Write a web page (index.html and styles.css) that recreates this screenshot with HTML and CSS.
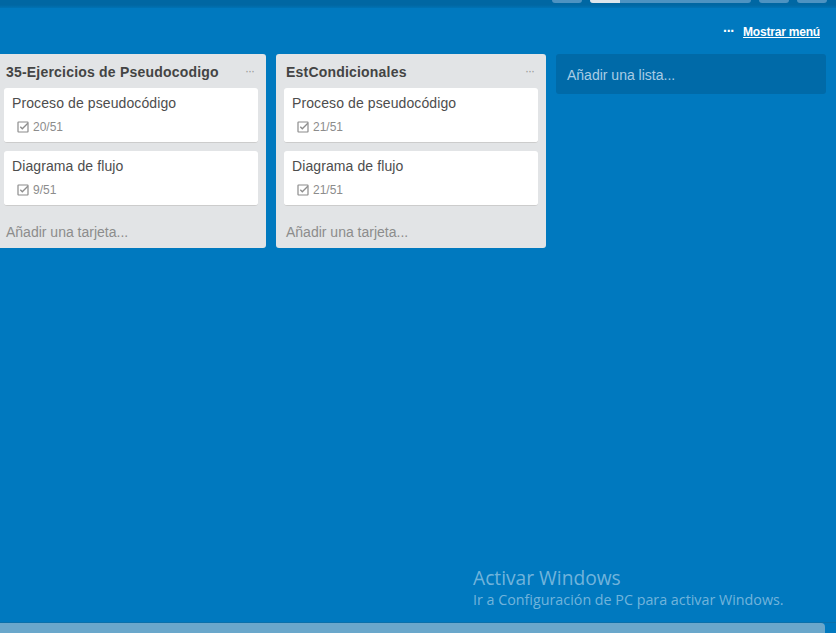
FILE: index.html
```html
<!DOCTYPE html>
<html lang="es">
<head>
<meta charset="utf-8">
<title>Tablero</title>
<link rel="stylesheet" href="styles.css">
</head>
<body>
<div class="page">
  <div class="topbar">
    <div class="top-btn"></div>
    <div class="top-search"><div class="top-search-left"></div></div>
    <div class="top-btn"></div>
    <div class="top-btn"></div>
  </div>
  <div class="board-header">
    <span class="menu-dots">&middot;&middot;&middot;</span>
    <a class="menu-link" href="#">Mostrar menú</a>
  </div>
  <div class="board">
    <div class="list list-first">
      <div class="list-header">
        <span class="list-title">35-Ejercicios de Pseudocodigo</span>
        <span class="list-menu">&middot;&middot;&middot;</span>
      </div>
      <div class="cards">
        <div class="card">
          <div class="card-title">Proceso de pseudocódigo</div>
          <div class="badge">
            <svg class="check" width="12" height="12" viewBox="0 0 12 12"><rect x="1" y="1" width="10" height="10" rx="0.5" fill="none" stroke="#8c8c8c" stroke-width="1.2"/><path d="M3.3 5.8 L5.3 7.8 L10.8 2.3" fill="none" stroke="#8c8c8c" stroke-width="1.3"/></svg>
            <span>20/51</span>
          </div>
        </div>
        <div class="card">
          <div class="card-title">Diagrama de flujo</div>
          <div class="badge">
            <svg class="check" width="12" height="12" viewBox="0 0 12 12"><rect x="1" y="1" width="10" height="10" rx="0.5" fill="none" stroke="#8c8c8c" stroke-width="1.2"/><path d="M3.3 5.8 L5.3 7.8 L10.8 2.3" fill="none" stroke="#8c8c8c" stroke-width="1.3"/></svg>
            <span>9/51</span>
          </div>
        </div>
      </div>
      <div class="add-card">Añadir una tarjeta...</div>
    </div>
    <div class="list">
      <div class="list-header">
        <span class="list-title">EstCondicionales</span>
        <span class="list-menu">&middot;&middot;&middot;</span>
      </div>
      <div class="cards">
        <div class="card">
          <div class="card-title">Proceso de pseudocódigo</div>
          <div class="badge">
            <svg class="check" width="12" height="12" viewBox="0 0 12 12"><rect x="1" y="1" width="10" height="10" rx="0.5" fill="none" stroke="#8c8c8c" stroke-width="1.2"/><path d="M3.3 5.8 L5.3 7.8 L10.8 2.3" fill="none" stroke="#8c8c8c" stroke-width="1.3"/></svg>
            <span>21/51</span>
          </div>
        </div>
        <div class="card">
          <div class="card-title">Diagrama de flujo</div>
          <div class="badge">
            <svg class="check" width="12" height="12" viewBox="0 0 12 12"><rect x="1" y="1" width="10" height="10" rx="0.5" fill="none" stroke="#8c8c8c" stroke-width="1.2"/><path d="M3.3 5.8 L5.3 7.8 L10.8 2.3" fill="none" stroke="#8c8c8c" stroke-width="1.3"/></svg>
            <span>21/51</span>
          </div>
        </div>
      </div>
      <div class="add-card">Añadir una tarjeta...</div>
    </div>
    <div class="add-list">Añadir una lista...</div>
  </div>
  <div class="scrollbar"><div class="scroll-thumb"></div></div>
  <div class="watermark">
    <div class="wm-title">Activar Windows</div>
    <div class="wm-sub">Ir a Configuración de PC para activar Windows.</div>
  </div>
</div>
</body>
</html>
```
FILE: styles.css
```css
* { box-sizing: border-box; }
html, body { margin: 0; padding: 0; }
body {
  background: #0079bf;
  font-family: "Liberation Sans", Arial, sans-serif;
  width: 836px;
  height: 633px;
  overflow: hidden;
}
.page {
  position: relative;
  display: flex;
  flex-direction: column;
  height: 633px;
}
.topbar {
  height: 8px;
  background: linear-gradient(#0067a3 0, #0067a3 5px, #0072b4 8px);
  display: flex;
  justify-content: flex-end;
  gap: 8px;
  padding-right: 9px;
}
.top-btn {
  width: 30px;
  height: 3px;
  background: #4d93c2;
  border-radius: 0 0 3px 3px;
}
.top-search {
  width: 161px;
  height: 3px;
  background: #4d93c2;
  border-radius: 0 0 3px 3px;
  display: flex;
}
.top-search-left {
  width: 30px;
  height: 3px;
  background: #dfe6ec;
  border-radius: 0 0 0 3px;
}
.board-header {
  height: 46px;
  display: flex;
  justify-content: flex-end;
  align-items: center;
  padding-right: 16px;
  padding-top: 1px;
  gap: 9px;
}
.menu-dots {
  color: #fff;
  font-weight: bold;
  font-size: 14px;
  letter-spacing: -1px;
  margin-top: -1px;
}
.menu-link {
  color: #fff;
  font-size: 12px;
  font-weight: bold;
  letter-spacing: -0.2px;
  text-decoration: underline;
}
.board {
  flex: 1;
  display: flex;
  align-items: flex-start;
  gap: 10px;
  margin-left: -4px;
}
.list {
  width: 270px;
  background: #e2e4e6;
  border-radius: 3px;
  padding: 0 8px;
  flex: none;
}
.list-header {
  height: 34px;
  display: flex;
  align-items: center;
  justify-content: space-between;
  padding: 0 4px 0 2px;
}
.list-title {
  font-weight: bold;
  font-size: 14px;
  letter-spacing: 0.2px;
  color: #444;
  padding-top: 1px;
}
.list-menu {
  color: #999;
  font-size: 12px;
  letter-spacing: -1px;
  margin-top: -1px;
}
.cards {
  display: flex;
  flex-direction: column;
  gap: 8px;
}
.card {
  background: #fff;
  border-radius: 3px;
  border-bottom: 1px solid #ccc;
  height: 55px;
  padding: 7px 8px 0;
}
.card-title {
  font-size: 14px;
  letter-spacing: 0.1px;
  color: #4d4d4d;
  line-height: 17px;
}
.badge {
  display: flex;
  align-items: center;
  gap: 4px;
  margin-top: 8px;
  padding-left: 5px;
  font-size: 12px;
  color: #8c8c8c;
}
.add-card {
  height: 42px;
  padding: 18px 2px 0;
  font-size: 14px;
  color: #8c8c8c;
}
.add-list {
  width: 270px;
  height: 40px;
  flex: none;
  background: #006aa8;
  border-radius: 3px;
  padding: 13px 11px 0;
  font-size: 14px;
  color: #a8cde5;
}
.scrollbar {
  height: 11px;
  border-top: 1px solid #0b70aa;
  padding-right: 11px;
}
.scroll-thumb {
  height: 10px;
  background: #6aa7cb;
  border-radius: 0 4px 0 0;
}
.watermark {
  position: absolute;
  left: 473px;
  top: 565px;
  font-family: "Open Sans", "Noto Sans", sans-serif;
  color: rgba(255, 255, 255, 0.45);
}
.wm-title {
  font-size: 19.2px;
  line-height: 25px;
}
.wm-sub {
  font-size: 14.3px;
  line-height: 20px;
}
```
